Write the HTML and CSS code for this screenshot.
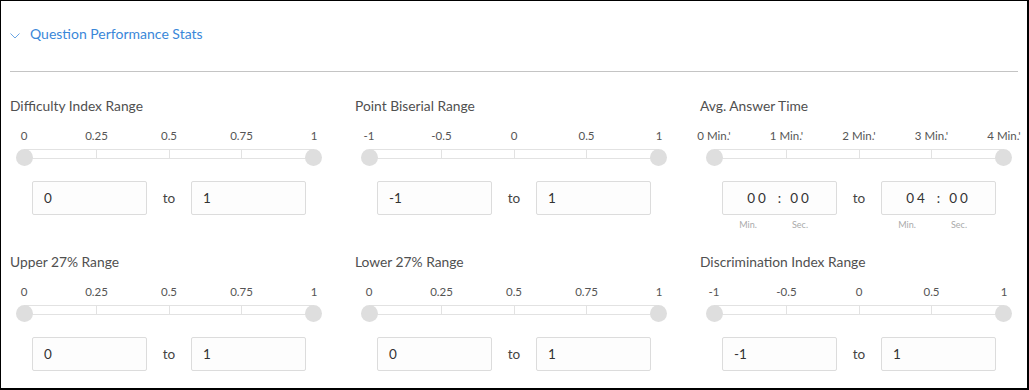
FILE: index.html
```html
<!DOCTYPE html>
<html>
    <head>
        <meta charset='utf-8'/>
        <title>Question Performance Stats</title>
        <link rel="stylesheet" href="styles.css">
    </head>
    <body>
        <div class="panel">
            <div class="panel-head">
                <svg class="chevron" width="10" height="6" viewBox="0 0 10 6"><path d="M0.5 0.5 L5 5 L9.5 0.5" fill="none" stroke="#6aa5e3" stroke-width="1"/></svg>
                <span>Question Performance Stats</span>
            </div>

            <div class="stats">
                <!-- difficulty -->
                <div class="stat">
                    <div class="stat-title">Difficulty Index Range</div>
                    <div class="scale"><span>0</span><span>0.25</span><span>0.5</span><span>0.75</span><span>1</span></div>
                    <div class="slider">
                        <div class="track"><i></i><i></i><i></i><i></i></div>
                        <span class="thumb thumb-min"></span>
                        <span class="thumb thumb-max"></span>
                    </div>
                    <div class="range-inputs">
                        <div class="box">0</div>
                        <span class="to">to</span>
                        <div class="box">1</div>
                    </div>
                </div>

                <!-- point biserial -->
                <div class="stat">
                    <div class="stat-title">Point Biserial Range</div>
                    <div class="scale"><span>-1</span><span>-0.5</span><span>0</span><span>0.5</span><span>1</span></div>
                    <div class="slider">
                        <div class="track"><i></i><i></i><i></i><i></i></div>
                        <span class="thumb thumb-min"></span>
                        <span class="thumb thumb-max"></span>
                    </div>
                    <div class="range-inputs">
                        <div class="box">-1</div>
                        <span class="to">to</span>
                        <div class="box">1</div>
                    </div>
                </div>

                <!-- answer time -->
                <div class="stat">
                    <div class="stat-title">Avg. Answer Time</div>
                    <div class="scale"><span>0 Min.'</span><span>1 Min.'</span><span>2 Min.'</span><span>3 Min.'</span><span>4 Min.'</span></div>
                    <div class="slider">
                        <div class="track"><i></i><i></i><i></i><i></i></div>
                        <span class="thumb thumb-min"></span>
                        <span class="thumb thumb-max"></span>
                    </div>
                    <div class="range-inputs">
                        <div class="box time"><span>00</span><span class="colon">:</span><span>00</span></div>
                        <span class="to">to</span>
                        <div class="box time"><span>04</span><span class="colon">:</span><span>00</span></div>
                    </div>
                    <div class="time-units">
                        <div class="units"><span>Min.</span><span>Sec.</span></div>
                        <span class="to"></span>
                        <div class="units"><span>Min.</span><span>Sec.</span></div>
                    </div>
                </div>

                <!-- upper 27 -->
                <div class="stat">
                    <div class="stat-title">Upper 27% Range</div>
                    <div class="scale"><span>0</span><span>0.25</span><span>0.5</span><span>0.75</span><span>1</span></div>
                    <div class="slider">
                        <div class="track"><i></i><i></i><i></i><i></i></div>
                        <span class="thumb thumb-min"></span>
                        <span class="thumb thumb-max"></span>
                    </div>
                    <div class="range-inputs">
                        <div class="box">0</div>
                        <span class="to">to</span>
                        <div class="box">1</div>
                    </div>
                </div>

                <!-- lower 27 -->
                <div class="stat">
                    <div class="stat-title">Lower 27% Range</div>
                    <div class="scale"><span>0</span><span>0.25</span><span>0.5</span><span>0.75</span><span>1</span></div>
                    <div class="slider">
                        <div class="track"><i></i><i></i><i></i><i></i></div>
                        <span class="thumb thumb-min"></span>
                        <span class="thumb thumb-max"></span>
                    </div>
                    <div class="range-inputs">
                        <div class="box">0</div>
                        <span class="to">to</span>
                        <div class="box">1</div>
                    </div>
                </div>

                <!-- discrimination -->
                <div class="stat">
                    <div class="stat-title">Discrimination Index Range</div>
                    <div class="scale"><span>-1</span><span>-0.5</span><span>0</span><span>0.5</span><span>1</span></div>
                    <div class="slider">
                        <div class="track"><i></i><i></i><i></i><i></i></div>
                        <span class="thumb thumb-min"></span>
                        <span class="thumb thumb-max"></span>
                    </div>
                    <div class="range-inputs">
                        <div class="box">-1</div>
                        <span class="to">to</span>
                        <div class="box">1</div>
                    </div>
                </div>
            </div>
        </div>
    </body>
</html>
```

FILE: styles.css
```css
* {
    margin: 0;
    padding: 0;
    box-sizing: border-box;
}

body {
    font-family: Lato, "Liberation Sans", sans-serif;
    color: #4a4a4a;
    background: #fff;
}

.panel {
    width: 1029px;
    height: 390px;
    border-style: solid;
    border-color: #000;
    border-width: 1px 2px 2px 1px;
    padding: 0 9px;
}

.panel-head {
    display: flex;
    align-items: flex-start;
    height: 71px;
    padding-top: 24px;
    border-bottom: 1px solid #c4c4c4;
    line-height: 18px;
    font-size: 14px;
    color: #3a87d9;
}

.chevron {
    margin: 8px 10px 0 0;
}

.stats {
    display: grid;
    grid-template-columns: repeat(3, 345px);
    row-gap: 23px;
    padding-top: 26px;
}

.stat-title {
    font-size: 13.8px;
    line-height: 16px;
    color: #505050;
}

.scale {
    display: flex;
    justify-content: space-between;
    width: 350px;
    margin: 15px 0 0 -16px;
    font-size: 11.5px;
    line-height: 14px;
    color: #555;
}

.scale span {
    width: 60px;
    text-align: center;
}

.slider {
    position: relative;
    width: 306px;
    height: 17px;
    margin: 6px 0 0 6px;
}

.track {
    display: flex;
    margin: 3px 8px 0;
    height: 10px;
    border: 1px solid #e2e2e2;
    background: #fff;
}

.track i {
    flex: 1;
    border-right: 1px solid #e2e2e2;
}

.track i:last-child {
    border-right: 0;
}

.thumb {
    position: absolute;
    top: 0;
    width: 17px;
    height: 17px;
    border-radius: 50%;
    background: #dedede;
}

.thumb-min {
    left: 0;
}

.thumb-max {
    right: 0;
}

.range-inputs,
.time-units {
    display: flex;
    align-items: center;
    margin: 15px 0 0 22px;
}

.box {
    width: 115px;
    height: 34px;
    border: 1px solid #dcdcdc;
    border-radius: 2px;
    background: #fdfdfd;
    padding-left: 11px;
    font-size: 13.5px;
    line-height: 32px;
    color: #333;
}

.box.time {
    display: flex;
    justify-content: center;
    padding-left: 0;
    gap: 9px;
}

.box.time span {
    letter-spacing: 3px;
}

.box.time .colon {
    letter-spacing: 0;
}

.to {
    width: 44px;
    text-align: center;
    font-size: 13.5px;
    color: #444;
}

.time-units {
    margin-top: 4px;
}

.units {
    display: flex;
    gap: 22px;
    width: 115px;
    padding-left: 11px;
    font-size: 9px;
    line-height: 12px;
    color: #aaa;
}

.units span {
    width: 30px;
    text-align: center;
}
```
